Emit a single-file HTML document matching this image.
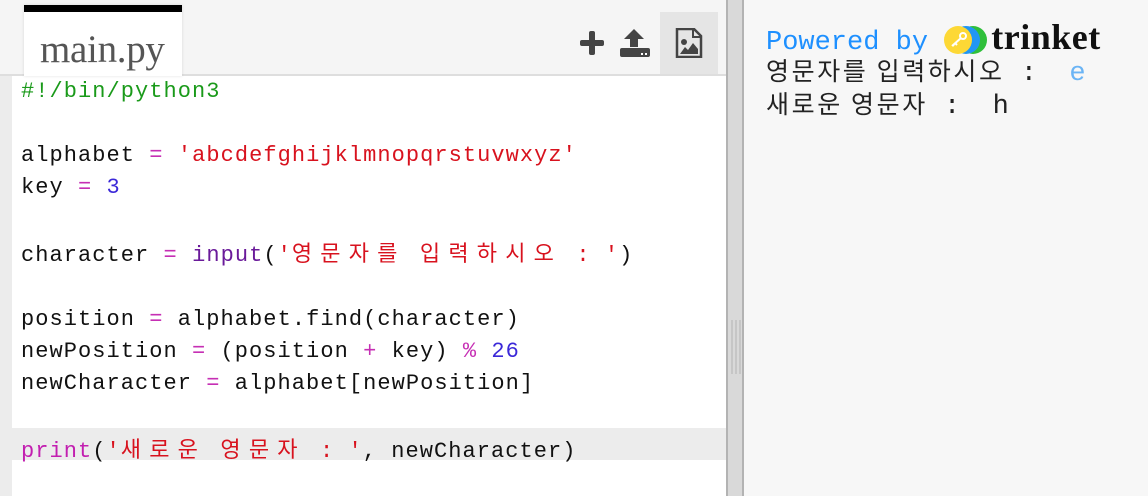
<!DOCTYPE html>
<html><head><meta charset="utf-8"><style>
*{margin:0;padding:0;box-sizing:border-box}
body{width:1148px;height:496px;overflow:hidden;background:#fff;position:relative;font-family:"Liberation Sans",sans-serif}
#bar{position:absolute;left:0;top:0;width:726px;height:76px;background:#f5f5f5;border-bottom:2px solid #dedede}
#tab{position:absolute;left:24px;top:5px;width:158px;height:71px;background:#fff;border-top:7px solid #000;box-shadow:0 0 3px rgba(0,0,0,.12)}
#tab span{position:absolute;left:16px;top:15px;font-family:"Liberation Serif","DejaVu Serif",serif;font-size:39px;color:#555;letter-spacing:-0.3px}
#imgbtn{position:absolute;left:660px;top:12px;width:58px;height:62px;background:#e5e5e5}
#gut{position:absolute;left:0;top:76px;width:12px;height:420px;background:#ececec}
#code{position:absolute;left:21px;top:76px;font-family:"Liberation Mono","DejaVu Sans Mono",monospace;font-size:22px;letter-spacing:1.05px;line-height:32px;color:#111;white-space:pre}
#code span{line-height:32px}
.hl{position:absolute;left:12px;top:428px;width:714px;height:32px;background:#ececec}
.c{color:#1a9a1a}.s{color:#d8121e}.o{color:#c62fb4}.n{color:#3b28d8}.b{color:#6a1a9a}.p{color:#c21fb0}
.k{font-family:"Noto Sans CJK KR","Liberation Mono",sans-serif;letter-spacing:8.2px}
#div{position:absolute;left:726px;top:0;width:18px;height:496px;background:#d9d9d9;border-left:2px solid #b3b3b3;border-right:2px solid #b3b3b3}
#grip{position:absolute;left:3px;top:320px;width:10px;height:54px;background:repeating-linear-gradient(90deg,#c6c6c6 0 2px,#d9d9d9 2px 4px)}
#right{position:absolute;left:744px;top:0;width:404px;height:496px;background:#f7f7f7}
#out{position:absolute;left:766px;top:21px;font-family:"Liberation Mono",monospace;font-size:27px;color:#222}
#out div{height:33px;line-height:33px;white-space:pre;overflow:visible}
.kr{font-family:"Noto Sans CJK KR",sans-serif;font-size:25px;letter-spacing:2.6px;line-height:33px}
</style></head><body>
<div id="bar">
 <div id="tab"><span>main.py</span></div>
 <svg style="position:absolute;left:579px;top:30px" width="26" height="26" viewBox="0 0 26 26"><rect x="10" y="1" width="6" height="24" rx="2" fill="#444"/><rect x="1" y="10" width="24" height="6" rx="2" fill="#444"/></svg>
 <svg style="position:absolute;left:619px;top:28px" width="32" height="32" viewBox="0 0 32 32"><path d="M15 1 L25 11 H19 V19 H11 V11 H5 Z" fill="#444"/><rect x="1" y="20" width="30" height="9" rx="2" fill="#444"/><rect x="22" y="25" width="2" height="2" fill="#fff"/><rect x="26" y="25" width="2" height="2" fill="#fff"/></svg>
 <div id="imgbtn"><svg style="position:absolute;left:15px;top:16px" width="28" height="30" viewBox="0 0 28 30"><path d="M2 1 H19 L26 8 V29 H2 Z" fill="none" stroke="#444" stroke-width="2.5"/><path d="M18 1 V9 H26" fill="none" stroke="#444" stroke-width="2"/><circle cx="9" cy="14" r="3" fill="#444"/><path d="M5 26 L10 19 L13 22 L18 15 L23 21 V26 Z" fill="#444"/></svg></div>
</div>
<div id="gut"></div>
<div class="hl"></div>
<div id="code"><span class="c">#!/bin/python3</span>

alphabet <span class="o">=</span> <span class="s">'abcdefghijklmnopqrstuvwxyz'</span>
key <span class="o">=</span> <span class="n">3</span>

character <span class="o">=</span> <span class="b">input</span>(<span class="s">'<span class="k">영문자를</span> <span class="k">입력하시오</span> : '</span>)

position <span class="o">=</span> alphabet.find(character)
newPosition <span class="o">=</span> (position <span class="o">+</span> key) <span class="o">%</span> <span class="n">26</span>
newCharacter <span class="o">=</span> alphabet[newPosition]

<span class="p">print</span>(<span class="s">'<span class="k">새로운</span> <span class="k">영문자</span> : '</span>, newCharacter)</div>
<div id="div"><div id="grip"></div></div>
<div id="right"></div>
<div id="out"><div><span style="color:#1e90ff">Powered by </span><span style="display:inline-block;position:relative;width:44px;height:28px;vertical-align:-5px"><span style="position:absolute;left:15px;top:0;width:28px;height:28px;border-radius:50%;background:#2fbf3a"></span><span style="position:absolute;left:8px;top:0;width:28px;height:28px;border-radius:50%;background:#2196f3"></span><span style="position:absolute;left:0;top:0;width:28px;height:28px;border-radius:50%;background:#fdd835"></span><svg style="position:absolute;left:5px;top:6px" width="18" height="16" viewBox="0 0 18 16"><circle cx="14" cy="4" r="3" fill="none" stroke="#fff" stroke-width="2"/><path d="M12 6 L3 14 M6 11 L8 13 M4 13 L5 14" stroke="#fff" stroke-width="2"/></svg></span><b style="font-family:'Liberation Serif',serif;font-size:36px;color:#111;margin-left:3px;letter-spacing:0.5px">trinket</b></div><div><span class="kr">영문자를 입력하시오</span> :  <span style="color:#6ab4f5">e</span></div><div><span class="kr">새로운 영문자</span> :  h</div></div>
</body></html>
